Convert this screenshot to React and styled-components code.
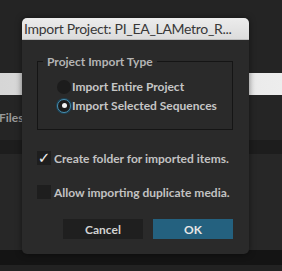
import styled, { createGlobalStyle } from "styled-components";

const GlobalStyle = createGlobalStyle`
  html, body {
    margin: 0;
    padding: 0;
    background: #242424;
    font-family: Lato, "Liberation Sans", sans-serif;
  }
`;

const Page = styled.div`
  position: relative;
  width: 282px;
  height: 271px;
  overflow: hidden;
  display: flex;
  flex-direction: column;
`;

const Band = styled.div`
  height: ${(p) => p.h}px;
  flex: ${(p) => (p.grow ? 1 : "none")};
  background: ${(p) => p.bg};
  display: flex;
  align-items: center;
`;

const PanelText = styled.span`
  font-size: 12px;
  font-weight: 700;
  color: #9a9a9a;
  margin-left: -1px;
`;

const Dialog = styled.div`
  position: absolute;
  left: 22px;
  top: 18px;
  width: 227px;
  height: 236px;
  background: #2a2a2a;
  border-radius: 5px;
  overflow: hidden;
  display: flex;
  flex-direction: column;
  box-shadow: 0 0 6px rgba(0, 0, 0, 0.5);
`;

const TitleBar = styled.div`
  flex: none;
  height: 22px;
  background: linear-gradient(#ececec, #dcdcdc);
  border-bottom: 1px solid #bdbdbd;
  box-sizing: border-box;
  display: flex;
  align-items: center;
  padding-left: 2px;
  font-size: 14px;
  letter-spacing: -0.3px;
  color: #383838;
  white-space: nowrap;
`;

const Body = styled.div`
  flex: 1;
  display: flex;
  flex-direction: column;
  padding: 14px 16px 0 15px;
`;

const Group = styled.fieldset`
  flex: none;
  margin: 0;
  padding: 9px 0 15px 19px;
  border: 1px solid #151515;
  display: flex;
  flex-direction: column;
  gap: 2px;
`;

const Legend = styled.legend`
  padding: 0 4px;
  margin-left: -14px;
  font-size: 12px;
  font-weight: 700;
  color: #b4b4b4;
`;

const Option = styled.label`
  flex: none;
  display: flex;
  align-items: center;
  height: 17px;
  gap: 1px;
  font-size: 12px;
  font-weight: 700;
  color: #c6c6c6;
  white-space: nowrap;
`;

const Radio = styled.span`
  flex: none;
  width: 14px;
  height: 14px;
  border-radius: 50%;
  background: #1c1c1c;
  box-sizing: border-box;
  display: flex;
  align-items: center;
  justify-content: center;
  border: ${(p) => (p.checked ? "1.5px solid #4a8fb0" : "none")};
  box-shadow: ${(p) => (p.checked ? "0 0 0 1px #1d4356" : "none")};
  &::after {
    content: "";
    display: ${(p) => (p.checked ? "block" : "none")};
    width: 5px;
    height: 5px;
    border-radius: 50%;
    background: #f4f4f4;
  }
`;

const Checks = styled.div`
  flex: none;
  display: flex;
  flex-direction: column;
  gap: 20px;
  margin-top: 21px;
`;

const CheckRow = styled.label`
  display: flex;
  align-items: center;
  gap: 3px;
  height: 14px;
  font-size: 12px;
  font-weight: 700;
  color: #c2c2c2;
  white-space: nowrap;
`;

const Box = styled.span`
  flex: none;
  width: 14px;
  height: 14px;
  background: #1e1e1e;
  color: #f2f2f2;
  font-size: 15px;
  line-height: 14px;
  text-align: center;
  font-family: "DejaVu Sans", sans-serif;
`;

const Buttons = styled.div`
  flex: none;
  display: flex;
  justify-content: flex-end;
  gap: 10px;
  margin-top: 20px;
`;

const Button = styled.button`
  width: 80px;
  height: 20px;
  border: none;
  padding: 0;
  font-family: inherit;
  font-size: 12px;
  font-weight: 700;
  background: ${(p) => (p.primary ? "#24617f" : "#1f1f1f")};
  color: ${(p) => (p.primary ? "#e6e6e6" : "#d2d2d2")};
`;

export default function App() {
  return (
    <>
      <GlobalStyle />
      <Page>
        <Band h={73} bg="#242424" />
        <Band h={22} bg="linear-gradient(90deg, #d6d6d6, #ededed)" />
        <Band h={45} bg="#252525">
          <PanelText>Files</PanelText>
        </Band>
        <Band h={14} bg="#1d1d1d" />
        <Band h={96} bg="#272727" />
        <Band h={15} bg="#141414" />
        <Band grow bg="#222222" />
        <Dialog>
          <TitleBar>Import Project: PI_EA_LAMetro_R...</TitleBar>
          <Body>
            <Group>
              <Legend>Project Import Type</Legend>
              <Option>
                <Radio />
                Import Entire Project
              </Option>
              <Option>
                <Radio checked />
                Import Selected Sequences
              </Option>
            </Group>
            <Checks>
              <CheckRow>
                <Box>✓</Box>
                Create folder for imported items.
              </CheckRow>
              <CheckRow>
                <Box />
                Allow importing duplicate media.
              </CheckRow>
            </Checks>
            <Buttons>
              <Button>Cancel</Button>
              <Button primary>OK</Button>
            </Buttons>
          </Body>
        </Dialog>
      </Page>
    </>
  );
}
